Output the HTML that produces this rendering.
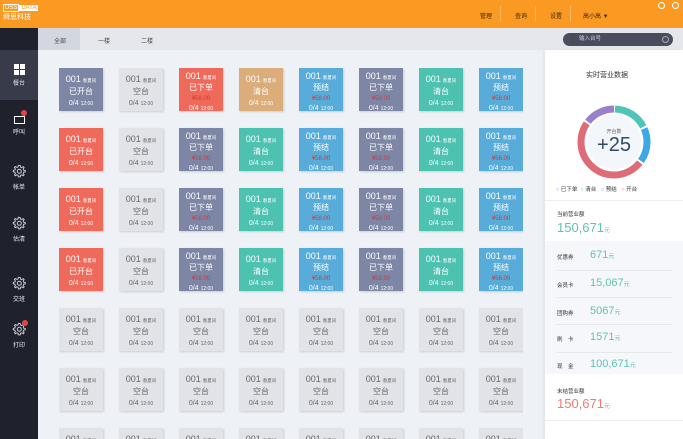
<!DOCTYPE html>
<html><head><meta charset="utf-8"><style>
*{margin:0;padding:0;box-sizing:border-box}
html,body{width:683px;height:439px;overflow:hidden}
body{font-family:"Liberation Sans","Noto Sans CJK SC",sans-serif}
#w{position:relative;width:683px;height:439px;overflow:hidden;background:#eef1f6}
.hdr{position:absolute;left:0;top:0;width:683px;height:28px;background:#fb9a22}
.logo{position:absolute;left:3px;top:3px;color:#fff;font-size:7px;line-height:9px}
.nav{position:absolute;top:11px;font-size:6px;color:#3a2a10}
.sep{position:absolute;top:6px;width:1px;height:16px;background:#f7b45c}
.side{position:absolute;left:0;top:28px;width:38px;height:411px;background:#1f222c}
.si{position:absolute;left:0;width:38px;color:#e8e8ec;font-size:6px;text-align:center}
.si svg{display:block;margin:0 auto 3px}
.tabs{position:absolute;left:38px;top:28px;width:645px;height:22px;background:#e5e7ec}
.tab{position:absolute;top:8px;font-size:6px;color:#444}
.search{position:absolute;left:563px;top:33px;width:110px;height:13px;border-radius:7px;background:#4a4e5c;color:#ccc;font-size:5.5px;padding-left:16px;line-height:13px}
.grid{position:absolute;left:59px;top:68px;height:371px;overflow:hidden;display:grid;grid-template-columns:repeat(8,44px);grid-template-rows:repeat(6,43px) 11px;column-gap:16px;row-gap:17px}
.t{color:#fff;text-align:center;box-shadow:1px 1px 2px rgba(0,0,0,.15);padding-top:6px;font-size:8px;line-height:11px;overflow:hidden}
.t b{font-weight:normal;font-size:9px}.t i{font-style:normal;font-size:4.5px;margin-left:2px}
.t .p{color:#d33;font-size:6px;line-height:6px}
.t .f{font-size:7px}.t .f i{font-size:5px}
.t.pr{padding-top:3px;line-height:10px}
.g{background:#7e86a5}.l{background:#e1e3e8;color:#666}.r{background:#ef6a5a}.y{background:#dbad7a}.c{background:#4dc2b1}.b{background:#57acd9}
.rp{position:absolute;left:545px;top:50px;width:138px;height:389px;background:#fff;box-shadow:-2px 0 3px rgba(0,0,0,.05)}
.gray{position:absolute;left:0;width:138px;background:#f6f7fa}
.lbl{position:absolute;font-size:5.5px;color:#333}
.val{position:absolute;color:#5cc5b0;font-size:11px}
.val small{font-size:6px}
.line{position:absolute;left:12px;width:115px;height:1px;background:#e6e8ec}
</style></head><body><div id="w">
<svg width="0" height="0" style="position:absolute"><defs><g id="gear"><path d="M7 1.5l1.2 0 .4 1.6 1.2.5 1.4-.9.9.9-.9 1.4.5 1.2 1.6.4v1.2l-1.6.4-.5 1.2.9 1.4-.9.9-1.4-.9-1.2.5-.4 1.6H6.4l-.4-1.6-1.2-.5-1.4.9-.9-.9.9-1.4-.5-1.2-1.6-.4V6.4l1.6-.4.5-1.2-.9-1.4.9-.9 1.4.9 1.2-.5.4-1.6z" fill="none" stroke="#c8c9ce" stroke-width="1"/><circle cx="7.3" cy="7.3" r="2" fill="none" stroke="#c8c9ce" stroke-width="1"/></g></defs></svg>
<div class="hdr">
<div class="logo"><span style="border:1px solid #fff;padding:0 1px;font-size:6px">DSS</span><span style="background:#fff;color:#fb9a22;font-size:6px;padding:0 2px">DATA</span><br>舜思科技</div>
<div class="nav" style="left:480px">管理</div><div class="sep" style="left:500px"></div>
<div class="nav" style="left:515px">查询</div><div class="sep" style="left:535px"></div>
<div class="nav" style="left:550px">设置</div><div class="sep" style="left:570px"></div>
<div class="nav" style="left:583px">高小高 ▼</div>
<div style="position:absolute;left:658px;top:2px;width:7px;height:7px;border:1px solid #fff;border-radius:50%"></div>
<div style="position:absolute;left:672px;top:2px;width:7px;height:7px;border:1px solid #fff;border-radius:50%"></div>
</div>
<div class="side">
<div class="si" style="top:22px;height:50px;background:#373b4a;padding-top:14px"><div style="width:11px;height:11px;background:#fff;margin:0 auto 3px;position:relative"><div style="position:absolute;left:5px;top:0;width:1px;height:11px;background:#373b4a"></div><div style="position:absolute;left:0;top:5px;width:11px;height:1px;background:#373b4a"></div></div>餐台</div>
<div class="si" style="top:88px"><div style="width:11px;height:8px;border:1.5px solid #fff;margin:0 auto 3px;position:relative"><div style="position:absolute;left:6px;top:-7px;width:6px;height:6px;border-radius:50%;background:#e5434b"></div></div>呼叫</div>
<div class="si" style="top:136px"><svg width="15" height="15"><use href="#gear"/></svg>帐单</div>
<div class="si" style="top:188px"><svg width="15" height="15"><use href="#gear"/></svg>估清</div>
<div class="si" style="top:248px"><svg width="15" height="15"><use href="#gear"/></svg>交班</div>
<div class="si" style="top:294px"><div style="position:relative;width:15px;margin:0 auto"><svg width="15" height="15"><use href="#gear"/></svg><div style="position:absolute;left:10px;top:-2px;width:6px;height:6px;border-radius:50%;background:#e5434b"></div></div>打印</div>
</div>
<div class="tabs">
<div style="position:absolute;left:0;top:0;width:42px;height:22px;background:#d3d7df"></div>
<div class="tab" style="left:16px">全部</div><div class="tab" style="left:60px">一楼</div><div class="tab" style="left:103px">二楼</div>
</div>
<div class="search">输入台号<span style="position:absolute;right:4px;top:3px;width:7px;height:7px;border:1px solid #aaa;border-radius:50%"></span></div>
<div class="grid">
<div class="t g"><b>001</b><i>春夏间</i><br>已开台<br><span class="f">0/4<i>12:00</i></span></div>
<div class="t l"><b>001</b><i>春夏间</i><br>空台<br><span class="f">0/4<i>12:00</i></span></div>
<div class="t r pr"><b>001</b><i>春夏间</i><br>已下单<br><span class="p">¥58.00</span><br><span class="f">0/4<i>12:00</i></span></div>
<div class="t y"><b>001</b><i>春夏间</i><br>清台<br><span class="f">0/4<i>12:00</i></span></div>
<div class="t b pr"><b>001</b><i>春夏间</i><br>预结<br><span class="p">¥58.00</span><br><span class="f">0/4<i>12:00</i></span></div>
<div class="t g pr"><b>001</b><i>春夏间</i><br>已下单<br><span class="p">¥58.00</span><br><span class="f">0/4<i>12:00</i></span></div>
<div class="t c"><b>001</b><i>春夏间</i><br>清台<br><span class="f">0/4<i>12:00</i></span></div>
<div class="t b pr"><b>001</b><i>春夏间</i><br>预结<br><span class="p">¥58.00</span><br><span class="f">0/4<i>12:00</i></span></div>

<div class="t r"><b>001</b><i>春夏间</i><br>已开台<br><span class="f">0/4<i>12:00</i></span></div>
<div class="t l"><b>001</b><i>春夏间</i><br>空台<br><span class="f">0/4<i>12:00</i></span></div>
<div class="t g pr"><b>001</b><i>春夏间</i><br>已下单<br><span class="p">¥58.00</span><br><span class="f">0/4<i>12:00</i></span></div>
<div class="t c"><b>001</b><i>春夏间</i><br>清台<br><span class="f">0/4<i>12:00</i></span></div>
<div class="t b pr"><b>001</b><i>春夏间</i><br>预结<br><span class="p">¥58.00</span><br><span class="f">0/4<i>12:00</i></span></div>
<div class="t g pr"><b>001</b><i>春夏间</i><br>已下单<br><span class="p">¥58.00</span><br><span class="f">0/4<i>12:00</i></span></div>
<div class="t c"><b>001</b><i>春夏间</i><br>清台<br><span class="f">0/4<i>12:00</i></span></div>
<div class="t b pr"><b>001</b><i>春夏间</i><br>预结<br><span class="p">¥58.00</span><br><span class="f">0/4<i>12:00</i></span></div>

<div class="t r"><b>001</b><i>春夏间</i><br>已开台<br><span class="f">0/4<i>12:00</i></span></div>
<div class="t l"><b>001</b><i>春夏间</i><br>空台<br><span class="f">0/4<i>12:00</i></span></div>
<div class="t g pr"><b>001</b><i>春夏间</i><br>已下单<br><span class="p">¥58.00</span><br><span class="f">0/4<i>12:00</i></span></div>
<div class="t c"><b>001</b><i>春夏间</i><br>清台<br><span class="f">0/4<i>12:00</i></span></div>
<div class="t b pr"><b>001</b><i>春夏间</i><br>预结<br><span class="p">¥58.00</span><br><span class="f">0/4<i>12:00</i></span></div>
<div class="t g pr"><b>001</b><i>春夏间</i><br>已下单<br><span class="p">¥58.00</span><br><span class="f">0/4<i>12:00</i></span></div>
<div class="t c"><b>001</b><i>春夏间</i><br>清台<br><span class="f">0/4<i>12:00</i></span></div>
<div class="t b pr"><b>001</b><i>春夏间</i><br>预结<br><span class="p">¥58.00</span><br><span class="f">0/4<i>12:00</i></span></div>

<div class="t r"><b>001</b><i>春夏间</i><br>已开台<br><span class="f">0/4<i>12:00</i></span></div>
<div class="t l"><b>001</b><i>春夏间</i><br>空台<br><span class="f">0/4<i>12:00</i></span></div>
<div class="t g pr"><b>001</b><i>春夏间</i><br>已下单<br><span class="p">¥58.00</span><br><span class="f">0/4<i>12:00</i></span></div>
<div class="t c"><b>001</b><i>春夏间</i><br>清台<br><span class="f">0/4<i>12:00</i></span></div>
<div class="t b pr"><b>001</b><i>春夏间</i><br>预结<br><span class="p">¥58.00</span><br><span class="f">0/4<i>12:00</i></span></div>
<div class="t g pr"><b>001</b><i>春夏间</i><br>已下单<br><span class="p">¥58.00</span><br><span class="f">0/4<i>12:00</i></span></div>
<div class="t c"><b>001</b><i>春夏间</i><br>清台<br><span class="f">0/4<i>12:00</i></span></div>
<div class="t b pr"><b>001</b><i>春夏间</i><br>预结<br><span class="p">¥58.00</span><br><span class="f">0/4<i>12:00</i></span></div>

<div class="t l"><b>001</b><i>春夏间</i><br>空台<br><span class="f">0/4<i>12:00</i></span></div><div class="t l"><b>001</b><i>春夏间</i><br>空台<br><span class="f">0/4<i>12:00</i></span></div><div class="t l"><b>001</b><i>春夏间</i><br>空台<br><span class="f">0/4<i>12:00</i></span></div><div class="t l"><b>001</b><i>春夏间</i><br>空台<br><span class="f">0/4<i>12:00</i></span></div><div class="t l"><b>001</b><i>春夏间</i><br>空台<br><span class="f">0/4<i>12:00</i></span></div><div class="t l"><b>001</b><i>春夏间</i><br>空台<br><span class="f">0/4<i>12:00</i></span></div><div class="t l"><b>001</b><i>春夏间</i><br>空台<br><span class="f">0/4<i>12:00</i></span></div><div class="t l"><b>001</b><i>春夏间</i><br>空台<br><span class="f">0/4<i>12:00</i></span></div>
<div class="t l"><b>001</b><i>春夏间</i><br>空台<br><span class="f">0/4<i>12:00</i></span></div><div class="t l"><b>001</b><i>春夏间</i><br>空台<br><span class="f">0/4<i>12:00</i></span></div><div class="t l"><b>001</b><i>春夏间</i><br>空台<br><span class="f">0/4<i>12:00</i></span></div><div class="t l"><b>001</b><i>春夏间</i><br>空台<br><span class="f">0/4<i>12:00</i></span></div><div class="t l"><b>001</b><i>春夏间</i><br>空台<br><span class="f">0/4<i>12:00</i></span></div><div class="t l"><b>001</b><i>春夏间</i><br>空台<br><span class="f">0/4<i>12:00</i></span></div><div class="t l"><b>001</b><i>春夏间</i><br>空台<br><span class="f">0/4<i>12:00</i></span></div><div class="t l"><b>001</b><i>春夏间</i><br>空台<br><span class="f">0/4<i>12:00</i></span></div>
<div class="t l"><b>001</b><i>春夏间</i></div><div class="t l"><b>001</b><i>春夏间</i></div><div class="t l"><b>001</b><i>春夏间</i></div><div class="t l"><b>001</b><i>春夏间</i></div><div class="t l"><b>001</b><i>春夏间</i></div><div class="t l"><b>001</b><i>春夏间</i></div><div class="t l"><b>001</b><i>春夏间</i></div><div class="t l"><b>001</b><i>春夏间</i></div>
</div>
<div class="rp">
<div class="lbl" style="left:41px;top:20px;font-size:7px">实时营业数据</div>
<svg style="position:absolute;left:0;top:0" width="138" height="140">
<g fill="none" stroke-width="7" transform="translate(69,92) rotate(-90)">
<circle r="33" stroke="#4fc4b8" stroke-dasharray="35 300" stroke-dashoffset="-1"/>
<circle r="33" stroke="#3ca9e6" stroke-dasharray="34 300" stroke-dashoffset="-38"/>
<circle r="33" stroke="#de6b78" stroke-dasharray="101 300" stroke-dashoffset="-74"/>
<circle r="33" stroke="#9a80cc" stroke-dasharray="30 300" stroke-dashoffset="-177"/>
</g>
<circle cx="69" cy="92" r="27" fill="#f3f6fa"/>
<text x="69" y="83" font-size="5" fill="#666" text-anchor="middle" font-family="Liberation Sans,Noto Sans CJK SC,sans-serif">开台数</text>
<text x="69" y="101" font-size="20" fill="#2f4a6b" text-anchor="middle" font-family="Liberation Sans,sans-serif">+25</text>
</svg>
<div class="lbl" style="left:11px;top:135px;font-size:5.5px"><span style="color:#9a80cc">○</span> 已下单 &nbsp;<span style="color:#4fc4b8">○</span> 清台 &nbsp;&nbsp;<span style="color:#3ca9e6">○</span> 预结 &nbsp;&nbsp;<span style="color:#de6b78">○</span> 开台</div>
<div style="position:absolute;left:0;top:150px;width:138px;height:1px;background:#eceef2"></div>
<div class="lbl" style="left:12px;top:160px">当前营业额</div>
<div class="val" style="left:12px;top:170px;font-size:13px">150,671<small>元</small></div>
<div class="gray" style="top:191px;height:133px"></div>
<div class="lbl" style="left:12px;top:203px">优惠券</div><div class="val" style="left:45px;top:199px">671<small>元</small></div><div class="line" style="top:220px"></div>
<div class="lbl" style="left:12px;top:231px">会员卡</div><div class="val" style="left:45px;top:227px">15,067<small>元</small></div><div class="line" style="top:247px"></div>
<div class="lbl" style="left:12px;top:259px">团购券</div><div class="val" style="left:45px;top:255px">5067<small>元</small></div><div class="line" style="top:274px"></div>
<div class="lbl" style="left:12px;top:285px">刷　卡</div><div class="val" style="left:45px;top:281px">1571<small>元</small></div><div class="line" style="top:302px"></div>
<div class="lbl" style="left:12px;top:312px">现　金</div><div class="val" style="left:45px;top:308px">100,671<small>元</small></div>
<div class="lbl" style="left:12px;top:337px">未结营业额</div>
<div class="val" style="left:12px;top:346px;font-size:13px;color:#ee7d72">150,671<small>元</small></div>
<div style="position:absolute;left:0;top:370px;width:138px;height:1px;background:#eceef2"></div>
</div>
</div></body></html>
